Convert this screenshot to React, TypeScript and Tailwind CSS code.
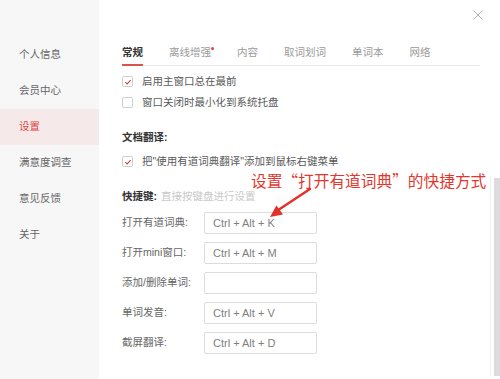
import React from "react";

const cjk = { fontFamily: '"Liberation Sans", "Noto Sans CJK SC", sans-serif' };

const menu = ["个人信息", "会员中心", "设置", "满意度调查", "意见反馈", "关于"];
const tabs = ["常规", "离线增强", "内容", "取词划词", "单词本", "网络"];
const keys = [
  { label: "打开有道词典:", value: "Ctrl + Alt + K" },
  { label: "打开mini窗口:", value: "Ctrl + Alt + M" },
  { label: "添加/删除单词:", value: "" },
  { label: "单词发音:", value: "Ctrl + Alt + V" },
  { label: "截屏翻译:", value: "Ctrl + Alt + D" },
];

function Check({ on }: { on?: boolean }) {
  return (
    <span className="w-[11px] h-[11px] border border-[#cfcfcf] rounded-[2px] bg-white flex items-center justify-center mr-[9px] shrink-0">
      {on && (
        <svg width="8" height="8" viewBox="0 0 8 8">
          <path d="M1.3 4.2 L3.2 5.9 L6.7 2.2" fill="none" stroke="#c8434a" strokeWidth="1.1" />
        </svg>
      )}
    </span>
  );
}

export default function App() {
  return (
    <div className="relative w-[500px] h-[379px] flex bg-white overflow-hidden text-[10.5px]" style={cjk}>
      {/* sidebar */}
      <div className="w-[99px] h-full bg-[#f7f7f7] pt-[37px] shrink-0">
        {menu.map((m) => (
          <div
            key={m}
            className={
              m === "设置"
                ? "h-[36px] flex items-center pl-[19px] bg-[#f5e9e9] text-[#e2453f]"
                : "h-[36px] flex items-center pl-[19px] text-[#666]"
            }
          >
            {m}
          </div>
        ))}
      </div>

      {/* content */}
      <div className="flex-1 pl-[23px] pr-[20px]">
        <div className="mt-[40px] h-[26px] border-b border-[#ececec] flex items-center gap-[26px]">
          {tabs.map((t, i) => (
            <div
              key={t}
              className={
                i === 0
                  ? "relative h-full flex items-center font-bold text-[#333]"
                  : "relative h-full flex items-center text-[#9a9a9a]"
              }
            >
              {t}
              {i === 0 && <span className="absolute left-0 right-0 bottom-[-1px] h-[2px] bg-[#d9534f]" />}
              {i === 1 && <span className="absolute right-[-3px] top-[7px] w-[3px] h-[3px] rounded-full bg-[#e0413a]" />}
            </div>
          ))}
        </div>

        <div className="pt-[5px] text-[#5a5a5a]">
          <div className="h-[21px] flex items-center">
            <Check on />
            启用主窗口总在最前
          </div>
          <div className="h-[21px] flex items-center">
            <Check />
            窗口关闭时最小化到系统托盘
          </div>
          <div className="h-[21px] mt-[14px] flex items-center font-bold text-[#333]">文档翻译:</div>
          <div className="h-[21px] mt-[3px] flex items-center">
            <Check on />
            把"使用有道词典翻译"添加到鼠标右键菜单
          </div>
          <div className="h-[21px] mt-[14px] flex items-center">
            <span className="font-bold text-[#333]">快捷键:</span>
            <span className="ml-[4px] text-[#c9c9c9]">直接按键盘进行设置</span>
          </div>
          <div className="mt-[5px] flex flex-col gap-[8px]">
            {keys.map((k) => (
              <div key={k.label} className="flex items-center">
                <span className="w-[82px] text-[#666]">{k.label}</span>
                <div className="w-[113px] h-[22px] border border-[#dcdcdc] rounded-[2px] flex items-center pl-[8px] text-[11px] text-[#808080]">
                  {k.value}
                </div>
              </div>
            ))}
          </div>
        </div>
      </div>

      {/* close */}
      <svg className="absolute left-[473px] top-[10px]" width="10" height="10" viewBox="0 0 10 10">
        <path d="M0.5 0.5 L9.5 9.5 M9.5 0.5 L0.5 9.5" stroke="#b5b5b5" strokeWidth="1" />
      </svg>

      {/* annotation */}
      <div
        className="absolute left-[251px] top-[170px] text-[15.7px] leading-[22px] text-[#e3372e] whitespace-nowrap"
        style={{ fontFamily: '"Noto Sans CJK SC", sans-serif' }}
      >
        设置“打开有道词典”的快捷方式
      </div>
      <svg className="absolute inset-0 pointer-events-none" width="500" height="379">
        <path d="M310 189 L279 209.5" stroke="#e3302a" strokeWidth="2.4" strokeLinecap="round" />
        <polygon points="270,217 276.5,205.5 283,214.5" fill="#e3302a" />
      </svg>

      {/* scrollbar */}
      <div className="absolute left-[490px] top-[176px] w-px h-[201px] bg-[#f0f0f0]" />
      <div className="absolute left-[494px] top-[178px] w-[6px] h-[198px] bg-[#dcdcdc]" />
    </div>
  );
}
